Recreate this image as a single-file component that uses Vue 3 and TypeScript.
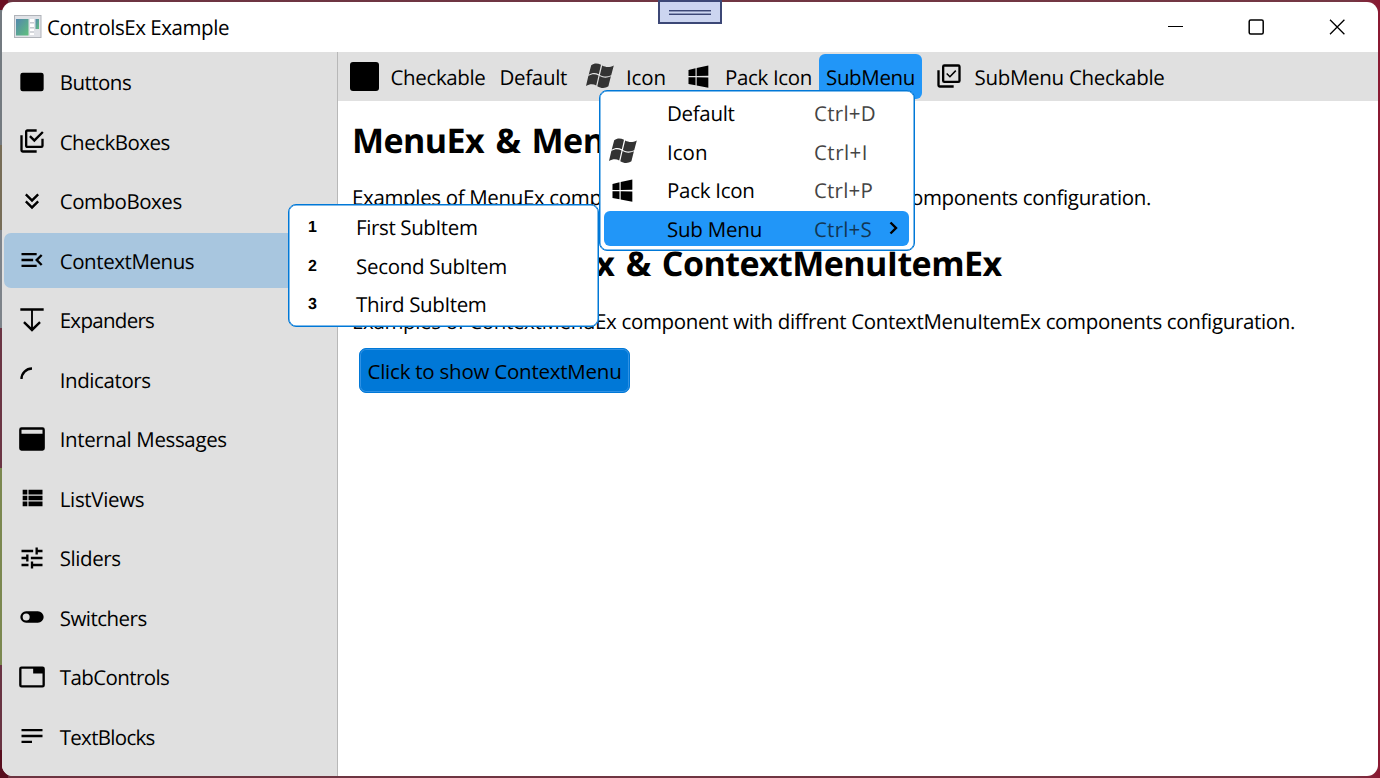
<script setup lang="ts">
import type { Directive } from 'vue'

interface NavItem { label: string; width: number; icon: string; active?: boolean }

/* Spreads the glyphs of a label evenly over the given advance width. */
const vFit: Directive<HTMLElement, number> = {
  mounted(el, { value }) {
    const count = (el.textContent ?? '').length
    const natural = el.getBoundingClientRect().width
    el.style.letterSpacing = `${(value - natural) / count}px`
  },
}

const windowsLogo = 'M3,12V6.75L9,5.43V11.91L3,12M20,3V11.75L10,11.9V5.21L20,3M3,13L9,13.09V19.9L3,18.75V13M20,13.25V22L10,20.09V13.1L20,13.25Z'

const nav: NavItem[] = [
  { label: 'Buttons', width: 71.5, icon: 'M20,4H4A2,2 0 0,0 2,6V18A2,2 0 0,0 4,20H20A2,2 0 0,0 22,18V6A2,2 0 0,0 20,4Z' },
  { label: 'CheckBoxes', width: 110, icon: 'M20,16V10H22V16A2,2 0 0,1 20,18H8C6.89,18 6,17.1 6,16V4C6,2.89 6.89,2 8,2H16V4H8V16H20M10.91,7.08L14,10.17L20.59,3.58L22,5L14,13L9.5,8.5L10.91,7.08M16,20V22H4A2,2 0 0,1 2,20V7H4V20H16Z' },
  { label: 'ComboBoxes', width: 122, icon: 'M16.59,5.59L18,7L12,13L6,7L7.41,5.59L12,10.17L16.59,5.59M16.59,11.59L18,13L12,19L6,13L7.41,11.59L12,16.17L16.59,11.59Z' },
  { label: 'ContextMenus', width: 134.5, icon: 'M21,15.61L19.59,17L14.58,12L19.59,7L21,8.39L17.44,12L21,15.61M3,6H16V8H3V6M3,13V11H13V13H3M3,18V16H16V18H3Z', active: true },
  { label: 'Expanders', width: 94.5, icon: 'M2,2H22V4H12.8V18.3L18.2,13.1L19.6,14.5L12,22L4.4,14.5L5.8,13.1L11.2,18.3V4H2Z' },
  { label: 'Indicators', width: 91, icon: 'M12,4V2A10,10 0 0,0 2,12H4A8,8 0 0,1 12,4Z' },
  { label: 'Internal Messages', width: 167, icon: 'M3,2H21A2,2 0 0,1 23,4V20A2,2 0 0,1 21,22H3A2,2 0 0,1 1,20V4A2,2 0 0,1 3,2M3,4V7.5H21V4Z' },
  { label: 'ListViews', width: 84.5, icon: 'M9,5V9H21V5M9,19H21V15H9M9,14H21V10H9M4,9H8V5H4M4,19H8V15H4M4,14H8V10H4V14Z' },
  { label: 'Sliders', width: 61, icon: 'M3,17V19H9V17H3M3,5V7H13V5H3M13,21V19H21V17H13V15H11V21H13M7,9V11H3V13H7V15H9V9H7M21,13V11H11V13H21M15,9H17V7H21V5H17V3H15V9Z' },
  { label: 'Switchers', width: 87, icon: 'M17,7H7A5,5 0 0,0 2,12A5,5 0 0,0 7,17H17A5,5 0 0,0 22,12A5,5 0 0,0 17,7M7,15A3,3 0 0,1 4,12A3,3 0 0,1 7,9A3,3 0 0,1 10,12A3,3 0 0,1 7,15Z' },
  { label: 'TabControls', width: 109.5, icon: 'M21,3H3A2,2 0 0,0 1,5V19A2,2 0 0,0 3,21H21A2,2 0 0,0 23,19V5A2,2 0 0,0 21,3M21,19H3V5H13V9H21V19Z' },
  { label: 'TextBlocks', width: 95, icon: 'M3,6H21V8H3V6M3,11H21V13H3V11M3,16H12V18H3V16Z' },
]

const menu = [
  { label: 'Default', width: 67.5, keys: 'Ctrl+D', keysWidth: 62, icon: '' },
  { label: 'Icon', width: 40.5, keys: 'Ctrl+I', keysWidth: 54, icon: 'flag' },
  { label: 'Pack Icon', width: 87.5, keys: 'Ctrl+P', keysWidth: 59, icon: 'pack' },
  { label: 'Sub Menu', width: 95, keys: 'Ctrl+S', keysWidth: 58, icon: '', open: true },
]

const subItems = [
  { label: 'First SubItem', width: 121.5 },
  { label: 'Second SubItem', width: 151 },
  { label: 'Third SubItem', width: 130.5 },
]
</script>

<template>
  <div class="desktop">
    <svg class="defs" width="0" height="0">
      <symbol id="flag" viewBox="0 0 28 26">
        <path d="M5.2,2.2C8.4,-0.2 11.4,-0.1 15,1.8L12.8,11.3C9.4,9.4 6.3,9.6 2.7,11.7Z" />
        <path d="M16.2,2.6C20,4.5 23.5,4.7 27.8,2.5L25.2,12.2C21.4,14.2 17.8,14 13.9,12Z" />
        <path d="M2.4,12.8C5.8,10.7 9.1,10.6 12.5,12.4L10.2,22.4C7,20.6 3.6,20.9 0,22.9Z" />
        <path d="M13.6,13.1C17.4,15.1 21,15.2 24.9,13.3L22.4,23.3C18.8,25.7 15.1,25.5 11.3,23.2Z" />
      </symbol>
    </svg>
    <div class="window">
      <header class="titlebar">
        <svg class="app-icon" viewBox="0 0 28 24">
          <defs>
            <linearGradient id="screen" x1="0" y1="0" x2="1" y2="1">
              <stop offset="0" stop-color="#5287ad" /><stop offset="1" stop-color="#60c07d" />
            </linearGradient>
          </defs>
          <rect x=".5" y=".5" width="26.5" height="22" fill="#e0e2e7" stroke="#b0b3b9" />
          <rect x="2" y="4" width="12.5" height="16.5" fill="url(#screen)" />
          <path d="M16,4H20V7H16ZM16,9H20V12H16ZM16,14H20V16H16ZM16,18H20V20H16Z" fill="#fff" />
          <rect x="21.5" y="4" width="3.5" height="10" fill="url(#screen)" />
          <path d="M16,7.5H20M16,12.5H20M16,17H20" stroke="#c8cbd0" />
        </svg>
        <span v-fit="182" class="title">ControlsEx Example</span>
        <div class="controls">
          <svg viewBox="0 0 16 16"><path d="M1,7.5H16" /></svg>
          <svg viewBox="0 0 16 16"><rect x="1.2" y="1" width="14" height="14" rx="1.5" stroke-width="1.5" /></svg>
          <svg viewBox="0 0 16 16"><path d="M1,.8L15.4,15.2M15.4,.8L1,15.2" stroke-width="1.3" /></svg>
        </div>
      </header>
      <div class="body">
        <nav class="sidebar">
          <div v-for="item in nav" :key="item.label" class="nav-item" :class="{ active: item.active }">
            <svg viewBox="0 0 24 24"><path fill-rule="evenodd" :d="item.icon" /></svg>
            <span v-fit="item.width">{{ item.label }}</span>
          </div>
        </nav>
        <main class="content">
          <div class="menubar">
            <div class="entry checkable"><i class="box" /><span v-fit="95">Checkable</span></div>
            <div class="entry plain"><span v-fit="67.5">Default</span></div>
            <div class="entry flagged"><svg class="flag"><use href="#flag" /></svg><span v-fit="40">Icon</span></div>
            <div class="entry packed"><svg class="pack" viewBox="0 0 24 24"><path :d="windowsLogo" /></svg><span v-fit="87">Pack Icon</span></div>
            <div class="entry opened"><span v-fit="89">SubMenu</span></div>
            <div class="entry multi">
              <svg class="pack" viewBox="0 0 24 24">
                <path d="M20,16V4H8V16H20M22,16A2,2 0 0,1 20,18H8A2,2 0 0,1 6,16V4A2,2 0 0,1 8,2H20A2,2 0 0,1 22,4V16M16,20V22H4A2,2 0 0,1 2,20V7H4V20H16Z" fill-rule="evenodd" />
                <path class="tick" d="M10,9.9L12.8,12.6L17.8,7.4" />
              </svg>
              <span v-fit="190">SubMenu Checkable</span>
            </div>
          </div>
          <section class="page">
            <h1><span v-fit="389">MenuEx &amp; MenuItemEx</span></h1>
            <p><span v-fit="799">Examples of MenuEx component with diffrent MenuItemEx components configuration.</span></p>
            <h1><span v-fit="649.5">ContextMenuEx &amp; ContextMenuItemEx</span></h1>
            <p><span v-fit="943">Examples of ContextMenuEx component with diffrent ContextMenuItemEx components configuration.</span></p>
            <button class="show"><span v-fit="254">Click to show ContextMenu</span></button>
          </section>
        </main>
      </div>
    </div>
    <div class="grip"><i /></div>
    <div class="popup sub">
      <div v-for="(item, i) in subItems" :key="item.label" class="row">
        <b>{{ i + 1 }}</b><span v-fit="item.width">{{ item.label }}</span>
      </div>
    </div>
    <div class="popup main">
      <div v-for="item in menu" :key="item.label" class="row" :class="{ hot: item.open }">
        <div class="slot">
          <svg v-if="item.icon === 'flag'" class="flag"><use href="#flag" /></svg>
          <svg v-if="item.icon === 'pack'" class="pack" viewBox="0 0 24 24"><path :d="windowsLogo" /></svg>
        </div>
        <div class="name"><span v-fit="item.width">{{ item.label }}</span></div>
        <div class="keys"><span v-fit="item.keysWidth">{{ item.keys }}</span></div>
        <svg v-if="item.open" class="arrow" viewBox="0 0 10 14"><path d="M1.5,1.5L7,7L1.5,12.5" /></svg>
      </div>
    </div>
  </div>
</template>

<style>
html, body { margin: 0; overflow: hidden; }
</style>

<style scoped>
* { box-sizing: border-box; }
.desktop {
  position: relative; width: 1380px; height: 778px; overflow: hidden; padding: 2px;
  font: 20.5px/28px "Open Sans", "Noto Sans", sans-serif; color: #000; text-rendering: geometricPrecision;
  background:
    linear-gradient(#6b1023 0 10px, #737a80 10px 145px, #776d57 145px 230px, #7d838a 230px 328px, #6b3544 328px 468px, #7b8850 468px 665px, #693443 665px 750px, #570d1d 750px) 0 0 / 8px 100% no-repeat,
    linear-gradient(90deg, #6c3441, #743744 98%, #8b1831);
}
.defs { position: absolute; }
span { display: inline-block; white-space: nowrap; }
.window { height: 774px; border-radius: 11px; overflow: hidden; background: #fff; }
.titlebar { height: 50px; display: flex; align-items: center; padding: 0 33px 0 12px; }
.app-icon { width: 28px; height: 24px; }
.title { margin-left: 5px; padding-top: 2px; }
.controls { margin-left: auto; display: flex; gap: 65px; }
.controls svg { width: 16px; height: 16px; fill: none; stroke: #000; stroke-width: 1; }
.body { display: flex; height: 724px; }
.sidebar { width: 336px; background: #e0e0e0; border-right: 1px solid #b8b8b8; padding: 2px 2px 0; display: flex; flex-direction: column; gap: 4px; }
.nav-item { height: 55.5px; flex: none; display: flex; align-items: center; gap: 13.7px; padding-left: 14px; border-radius: 7px; }
.nav-item svg { width: 28px; height: 28px; flex: none; }
.nav-item span { padding-top: 3px; }
.nav-item.active { background: #a8c6df; }
.content { flex: 1; min-width: 0; }
.menubar { height: 49px; background: #e0e0e0; display: flex; align-items: center; padding-left: 11.5px; }
.entry { display: flex; align-items: center; height: 45px; }
.entry span { padding-top: 2px; }
.box { width: 29.5px; height: 29px; border-radius: 3px; background: #000; }
.checkable { gap: 11.5px; }
.plain { margin-left: 14px; }
.flag { width: 28px; height: 26px; fill: #333; flex: none; }
.pack { width: 28px; height: 28px; flex: none; }
.entry .flag, .entry .pack { margin-top: -1px; }
.flagged { margin-left: 18.5px; gap: 12.5px; }
.packed { margin-left: 18.5px; gap: 12.5px; }
.opened { margin-left: 7px; padding: 0 6.5px 0 7px; background: #2196f8; border-radius: 6px; }
.multi { margin-left: 13px; gap: 12px; }
.tick { fill: none; stroke: #000; stroke-width: 1.3; }
.page { padding: 16px 0 0 14px; }
h1 { margin: 0; font-size: 34px; line-height: 46px; font-weight: 700; height: 46px; word-spacing: 3px; }
p { margin: 21px 0 28px; height: 28px; }
h1 + p:last-of-type { margin-top: 22px; }
.show {
  display: block; margin: -16px 0 0 7px; width: 271px; height: 45px; padding: 0 7.5px; text-align: left;
  font: inherit; color: #000; background: #0078d7; border: 1px solid #0078d7; border-radius: 7px; box-shadow: inset 0 0 0 1px #2f91e4;
}
.grip { position: absolute; left: 658px; top: 0; width: 64px; height: 24px; background: #ccd5f0; border: 2px solid #3c4776; display: flex; justify-content: center; }
.grip i { margin-top: 8px; width: 42px; height: 5px; border: solid #3c4776; border-width: 1px 0; background: linear-gradient(#8a94b8 1px, #ccd5f0 1px 2px, #8a94b8 2px); }
.popup { position: absolute; background: #fff; border: 1px solid #0078d7; border-radius: 8px; box-shadow: inset 0 0 0 .5px #0078d7; }
.sub { left: 288px; top: 204px; width: 311px; height: 123px; padding-top: 4px; }
.sub .row { height: 38.4px; display: flex; align-items: center; }
.sub b { width: 67px; padding-left: 19px; font: 900 16px/28px "Liberation Sans", sans-serif; }
.main { left: 599px; top: 90px; width: 316px; height: 161px; padding: 4px 5px 0 4px; }
.main .row { height: 35px; margin-bottom: 3.6px; display: flex; align-items: center; border-radius: 6px; }
.main span { padding-top: 2px; }
.main .row:nth-child(even) span { padding-top: 4px; }
.hot { background: #2196f8; }
.slot { width: 63px; padding-left: 5px; display: flex; align-items: center; }
.main .name { width: 147px; }
.keys { color: #444; width: 75px; }
.hot .keys { color: #123653; }
.arrow { width: 10px; height: 14px; fill: none; stroke: #000; stroke-width: 2.4; }
</style>
